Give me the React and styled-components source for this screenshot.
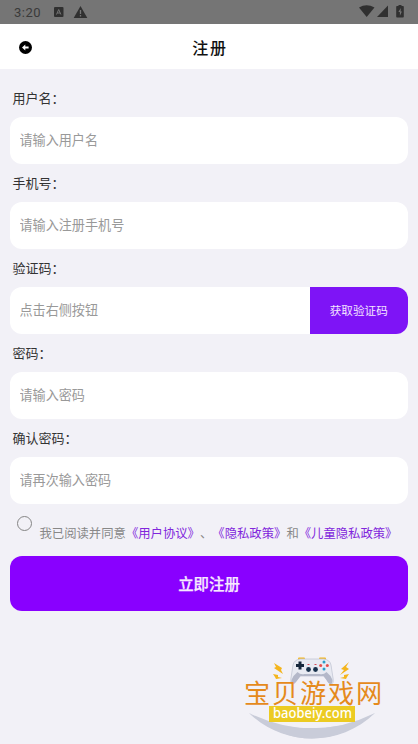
import { useState } from "react";
import styled, { createGlobalStyle } from "styled-components";

const GlobalStyle = createGlobalStyle`
  * {
    box-sizing: border-box;
  }
  body {
    margin: 0;
    background: #f2f1f7;
    font-family: "Noto Sans CJK SC", "Noto Sans", sans-serif;
  }
`;

const Page = styled.div`
  height: 744px;
  display: flex;
  flex-direction: column;
  overflow: hidden;
`;

const StatusBar = styled.div`
  height: 24px;
  flex: none;
  display: flex;
  align-items: center;
  justify-content: space-between;
  padding: 0 12px 0 14px;
  background: #757575;
  color: #3a3a3a;
  svg {
    display: block;
  }
`;

const StatusGroup = styled.div`
  display: flex;
  align-items: center;
`;

const Clock = styled.span`
  width: 40px;
  font: 13px/24px Roboto, sans-serif;
  letter-spacing: 0.5px;
  padding-top: 1px;
`;

const Header = styled.header`
  height: 45px;
  flex: none;
  display: grid;
  grid-template-columns: 52px 1fr 52px;
  align-items: center;
  background: #fff;
`;

const BackButton = styled.button`
  width: 13px;
  height: 13px;
  margin: 1px 0 0 19px;
  padding: 0;
  border: none;
  background: none;
  svg {
    display: block;
  }
`;

const Title = styled.h1`
  margin: 1px 0 0 2px;
  text-align: center;
  font-size: 16px;
  line-height: 24px;
  font-weight: 500;
  letter-spacing: 1.8px;
  color: #111;
`;

const Form = styled.form`
  display: flex;
  flex-direction: column;
  padding: 10px 10px 0;
`;

const Field = styled.label`
  display: flex;
  flex-direction: column;
  height: 85.1px;
`;

const Label = styled.span`
  height: 38px;
  padding-left: 2.5px;
  font-size: 13px;
  line-height: 38px;
  color: #333;
`;

const InputRow = styled.div`
  display: flex;
  height: 47.3px;
  border-radius: 12px;
  overflow: hidden;
  background: #fff;
`;

const Input = styled.input`
  flex: 1;
  min-width: 0;
  padding: 0 9.5px 2px;
  border: none;
  outline: none;
  background: none;
  font-family: inherit;
  font-size: 13.1px;
  &::placeholder {
    color: #999;
  }
`;

const CodeButton = styled.button`
  width: 98.5px;
  padding: 0 0 1px;
  border: none;
  background: #7e14f6;
  color: #f3e4ff;
  font-family: inherit;
  font-size: 11.6px;
`;

const Terms = styled.div`
  display: flex;
  height: 52px;
  padding: 12px 0 0 7px;
`;

const Radio = styled.button`
  width: 15px;
  height: 15px;
  flex: none;
  padding: 0;
  border: 1px solid #858585;
  border-radius: 50%;
  background: ${(props) => (props.$checked ? "#8a00ff" : "transparent")};
`;

const TermsText = styled.p`
  margin: 7px 0 0 7.5px;
  font-size: 12.35px;
  line-height: 20px;
  white-space: nowrap;
  text-spacing-trim: space-all;
  color: #888;
`;

const Link = styled.span`
  color: #8126dc;
`;

const Submit = styled.button`
  height: 54.5px;
  padding: 0 0 2px;
  border: none;
  border-radius: 12px;
  background: #8900ff;
  color: #f7e9ff;
  font-family: inherit;
  font-size: 15.4px;
  font-weight: 500;
  -webkit-text-stroke: 0.25px #f7e9ff;
`;

const Logo = styled.svg`
  display: block;
  flex: none;
  align-self: flex-end;
  margin: 39px 28px 0 0;
`;

const fields = [
  { label: "用户名：", placeholder: "请输入用户名" },
  { label: "手机号：", placeholder: "请输入注册手机号" },
  { label: "验证码：", placeholder: "点击右侧按钮", code: true },
  { label: "密码：", placeholder: "请输入密码", type: "password" },
  { label: "确认密码：", placeholder: "请再次输入密码", type: "password" },
];

function SiteLogo() {
  return (
    <Logo width="150" height="94" viewBox="240 650 150 94">
      <path d="M249 713C284 747 340 747 375 713C347 733 277 733 249 713Z" fill="#c9ccd9" />
      <path d="M249 713Q312 764 375 713Q312 744 249 713Z" fill="#c9ccd9" />
      <g fill="#f4b51d">
        <path d="M274 663l8 5-1 2 2 4-9-6 2-1z" />
        <path d="M349 662l-8 7 3 1-4 5 9-6-3-2z" />
        <path d="M273 674l5 1v2l4 1-6 1-1-2z" />
        <path d="M349 674l-5 1v2l-4 1 6 1 1-2z" />
        <rect x="298" y="657.5" width="7" height="3" rx="1" />
        <rect x="319" y="657.5" width="7" height="3" rx="1" />
      </g>
      {/* gamepad */}
      <path
        d="M300 659h24q6 1 7 6l2 13q1 6-2 6-2 0-4-4l-3-4h-24l-3 4q-3 4-4 4-3 0-2-6l2-13q1-5 7-6z"
        fill="#e8eaf2"
        stroke="#c3c6d4"
        strokeWidth="0.8"
      />
      <path
        d="M291.5 680q2-5 6-8 3 3 7 2h15q4 1 7-2 4 3 6 8 0 4-2 4-2 0-4-4l-3-4h-23l-3 4q-3 4-4 4-3 0-2-4z"
        fill="#b4b8c9"
      />
      <path d="M300 661.5v8M296 665.5h8" stroke="#16273c" strokeWidth="3" />
      <circle cx="308.5" cy="669.5" r="2.4" fill="#17304a" />
      <circle cx="315.5" cy="669.5" r="2.4" fill="#17304a" />
      <path d="M307.5 664.5h2M314.5 664.5h2" stroke="#d64a5a" strokeWidth="1.2" />
      <circle cx="324" cy="662" r="1.5" fill="#2a9ec9" />
      <circle cx="324" cy="669" r="1.5" fill="#2a9ec9" />
      <circle cx="320.7" cy="665.5" r="1.5" fill="#e74e4a" />
      <circle cx="327.3" cy="665.5" r="1.5" fill="#e74e4a" />
      <text x="244" y="702.5" fontSize="26.2" letterSpacing="1.8" fill="#e58a1c">
        宝贝游戏网
      </text>
      <rect x="269" y="706" width="86" height="16" fill="#eccb22" />
      <text
        x="273"
        y="718"
        fontFamily="Noto Sans"
        fontSize="13.8"
        fontWeight="500"
        textLength="79"
        lengthAdjust="spacingAndGlyphs"
        fill="#fff"
      >
        baobeiy.com
      </text>
    </Logo>
  );
}

export default function App() {
  const [agreed, setAgreed] = useState(false);

  return (
    <Page>
      <GlobalStyle />
      <StatusBar>
        <StatusGroup>
          <Clock>3:20</Clock>
          <svg width="34" height="14" viewBox="0 0 34 14">
            <rect y="2" width="9.5" height="10" rx="1" fill="#303030" />
            <path d="M2.5 9.5l2.2-5 2.2 5M3.3 8h2.8" fill="none" stroke="#757575" />
            <path d="M26.5 1l6.8 12H19.7z" fill="#303030" />
            <path d="M26.5 5v4M26.5 10v1.5" stroke="#757575" strokeWidth="1.3" />
          </svg>
        </StatusGroup>
        <svg width="47" height="14" viewBox="0 0 47 14">
          <g fill="#303030">
            <path d="M0 2.5Q7.5-2 15.5 2.5L7.7 12z" />
            <path d="M29 .5V12H18z" />
            <path d="M38 1h1.5V-.5h3V1H44q.8 0 .8.8V11.5q0 1-.8 1h-6q-.8 0-.8-1V1.8q0-.8.8-.8z" />
          </g>
          <path d="M41.8 3l-2.4 4h1.5v3.7l2-4.2h-1.3z" fill="#757575" />
        </svg>
      </StatusBar>

      <Header>
        <BackButton type="button">
          <svg width="13" height="13" viewBox="0 0 13 13">
            <circle cx="6.5" cy="6.5" r="6.5" fill="#000" />
            <path d="M3 6.5l3.3-3v2h3.3v2H6.3v2z" fill="#fff" />
          </svg>
        </BackButton>
        <Title>注册</Title>
      </Header>

      <Form onSubmit={(e) => e.preventDefault()}>
        {fields.map((field) => (
          <Field key={field.label}>
            <Label>{field.label}</Label>
            <InputRow>
              <Input type={field.type || "text"} placeholder={field.placeholder} />
              {field.code && <CodeButton type="button">获取验证码</CodeButton>}
            </InputRow>
          </Field>
        ))}
        <Terms>
          <Radio type="button" $checked={agreed} onClick={() => setAgreed(!agreed)} />
          <TermsText>
            我已阅读并同意<Link>《用户协议》</Link>、<Link>《隐私政策》</Link>和
            <Link>《儿童隐私政策》</Link>
          </TermsText>
        </Terms>
        <Submit type="submit">立即注册</Submit>
      </Form>

      <SiteLogo />
    </Page>
  );
}
